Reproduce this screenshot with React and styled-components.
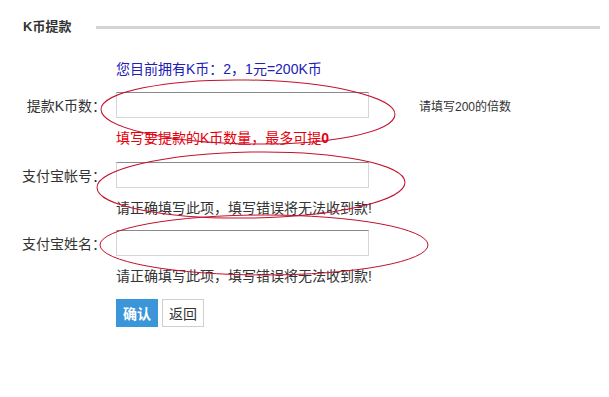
import styled, { createGlobalStyle } from 'styled-components';

const GlobalStyle = createGlobalStyle`
    html, body {
        margin: 0;
        padding: 0;
        background: #ffffff;
    }
    body {
        font-family: "Liberation Sans", "Noto Sans CJK SC", sans-serif;
        font-size: 14px;
        color: #333;
    }
`

const Page = styled.div`
    position: relative;
    width: 609px;
    height: 397px;
    overflow: hidden;
`

const Header = styled.div`
    display: flex;
    align-items: center;
    padding: 19px 9px 0 23px;
    height: 16px;
    h2 {
        margin: 0;
        font-size: 13px;
        line-height: 16px;
        font-weight: bold;
        color: #333;
    }
    .header_line {
        flex: 1;
        height: 3px;
        margin-left: 25px;
        background-color: #d4d4d4;
    }
`

const Form = styled.div`
    padding-top: 24px;
    display: flex;
    flex-direction: column;
`

const Balance = styled.div`
    margin-left: 116px;
    line-height: 20px;
    color: #2020b4;
`

const FieldRow = styled.div`
    display: flex;
    align-items: center;
    margin-top: ${props => props.top}px;
    height: 26px;
    label {
        width: 106px;
        text-align: right;
        margin-right: 10px;
        color: #333;
    }
    input {
        box-sizing: border-box;
        width: 253px;
        height: 26px;
        border: 1px solid #d6d6d6;
        border-top-color: #8a8a8a;
        outline: none;
        padding: 0 6px;
    }
    .field_hint {
        margin-left: 50px;
        font-size: 12px;
        color: #333;
    }
`

const Tip = styled.div`
    margin-left: 116px;
    margin-top: 10px;
    line-height: 20px;
    color: ${props => (props.warn ? '#e8000b' : '#333')};
    b {
        font-weight: bold;
    }
`

const Buttons = styled.div`
    display: flex;
    gap: 4px;
    margin: 13px 0 0 116px;
`

const Button = styled.button`
    box-sizing: border-box;
    height: 28px;
    padding: 0 6px;
    font-family: inherit;
    font-size: 14px;
    cursor: pointer;
    border: 1px solid ${props => (props.primary ? '#3a96d8' : '#cfcfcf')};
    background-color: ${props => (props.primary ? '#3a96d8' : '#ffffff')};
    color: ${props => (props.primary ? '#ffffff' : '#333')};
    font-weight: ${props => (props.primary ? 'bold' : 'normal')};
`

const Marks = styled.svg`
    position: absolute;
    left: 0;
    top: 0;
    pointer-events: none;
    ellipse {
        fill: none;
        stroke: #c4102c;
        stroke-width: 1;
    }
`

const App = () => {
    return (
        <Page>
            <GlobalStyle />
            <Header>
                <h2>K币提款</h2>
                <div className="header_line"></div>
            </Header>

            <Form>
                <Balance>您目前拥有K币：2，1元=200K币</Balance>

                <FieldRow top={13}>
                    <label>提款K币数：</label>
                    <input type="text" />
                    <span className="field_hint">请填写200的倍数</span>
                </FieldRow>
                <Tip warn>填写要提款的K币数量，最多可提<b>0</b></Tip>

                <FieldRow top={14}>
                    <label>支付宝帐号：</label>
                    <input type="text" />
                </FieldRow>
                <Tip>请正确填写此项，填写错误将无法收到款!</Tip>

                <FieldRow top={12}>
                    <label>支付宝姓名：</label>
                    <input type="text" />
                </FieldRow>
                <Tip>请正确填写此项，填写错误将无法收到款!</Tip>

                <Buttons>
                    <Button primary>确认</Button>
                    <Button>返回</Button>
                </Buttons>
            </Form>

            <Marks width="609" height="397" viewBox="0 0 609 397">
                <ellipse cx="248" cy="112" rx="147" ry="32" transform="rotate(1 248 112)" />
                <ellipse cx="251" cy="185" rx="154" ry="33" transform="rotate(-1 251 185)" />
                <ellipse cx="264" cy="245" rx="164" ry="30" />
            </Marks>
        </Page>
    );
};

export default App;
